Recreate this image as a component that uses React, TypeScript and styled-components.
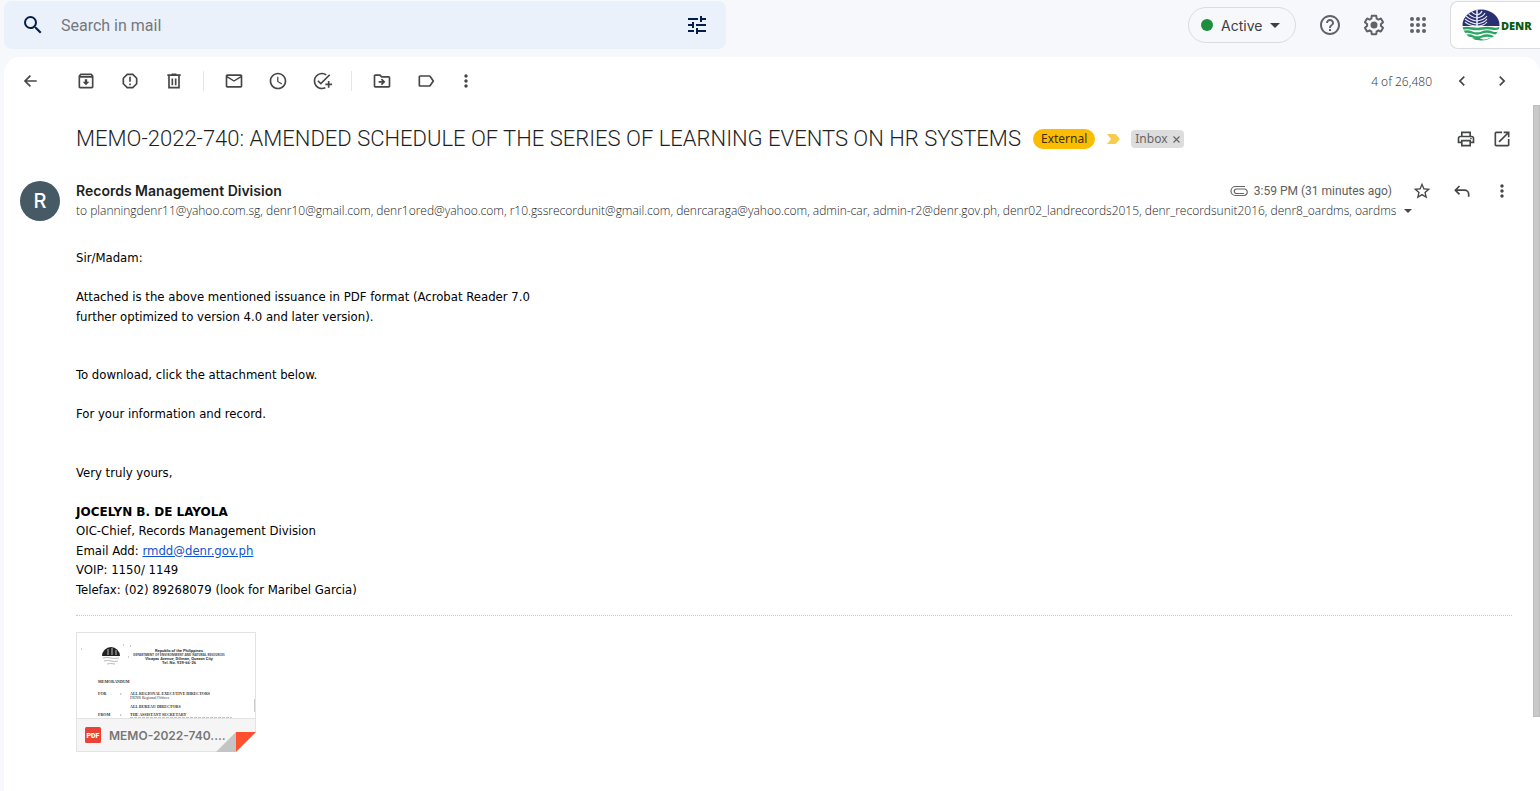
import React from "react";
import styled, { createGlobalStyle } from "styled-components";
import {
  MdAccessTime,
  MdAddTask,
  MdChevronLeft,
  MdChevronRight,
  MdHelpOutline,
  MdLabelOutline,
  MdMoreVert,
  MdOpenInNew,
  MdOutlineArchive,
  MdOutlineDriveFileMove,
  MdOutlineMail,
  MdOutlinePrint,
  MdReportGmailerrorred,
  MdSearch,
  MdStarBorder,
  MdTune,
} from "react-icons/md";

const ui = `Inter, Roboto, "Liberation Sans", sans-serif`;

const GlobalStyle = createGlobalStyle`
  *, *::before, *::after { box-sizing: border-box; }
  body { margin: 0; background: #f6f8fc; color: #202124; font-family: ${ui}; overflow: hidden; }
  button { font: inherit; color: inherit; border: 0; padding: 0; background: none; cursor: pointer; }
  svg { display: block; flex: none; }
`;

const Page = styled.div`
  display: flex;
  flex-direction: column;
  height: 100vh;
`;

const Header = styled.header`
  display: flex;
  align-items: flex-start;
  justify-content: space-between;
  height: 57px;
  flex: none;
  padding: 1px 0 0 4px;
`;

const SearchBar = styled.form`
  display: flex;
  align-items: center;
  flex: 0 1 722px;
  height: 48px;
  padding: 0 8px;
  border-radius: 8px;
  background: #eaf1fb;
  color: #041e49;
`;

const SearchButton = styled.button`
  display: grid;
  place-items: center;
  width: 42px;
  height: 40px;
  flex: none;
`;

const SearchInput = styled.input`
  flex: 1;
  min-width: 0;
  border: 0;
  outline: 0;
  padding: 0 0 0 7px;
  background: transparent;
  font: 400 16px Roboto, sans-serif;
  color: #202124;
  &::placeholder { color: #74787c; opacity: 1; }
`;

const HeaderTools = styled.div`
  display: flex;
  align-items: center;
  height: 48px;
  flex: none;
  color: #5f6368;
`;

const StatusButton = styled.button`
  display: flex;
  align-items: center;
  width: 108px;
  height: 36px;
  margin-right: 12px;
  padding: 0 12px;
  gap: 8px;
  border: 1px solid #dadce0;
  border-radius: 18px;
  font-size: 14px;
  color: #3c4043;
`;

const StatusDot = styled.span`
  width: 12px;
  height: 12px;
  border-radius: 50%;
  background: #1e8e3e;
`;

const Caret = styled.span<{ $size: number }>`
  display: block;
  width: 0;
  height: 0;
  border: ${(p) => p.$size}px solid transparent;
  border-top-color: currentColor;
  border-bottom: 0;
`;

const ToolButton = styled.button<{ $width: number }>`
  display: grid;
  place-items: center;
  width: ${(p) => p.$width}px;
  height: 40px;
  flex: none;
`;

const BrandLink = styled.a`
  display: flex;
  align-items: center;
  gap: 1px;
  width: 90px;
  height: 48px;
  margin-left: 10px;
  padding-left: 11px;
  border: 1px solid #dadce0;
  border-right: 0;
  border-radius: 8px 0 0 8px;
  background: #fff;
  color: #0b5a12;
  font: 800 11px "Open Sans", sans-serif;
  text-decoration: none;
`;

const Panel = styled.main`
  display: flex;
  flex-direction: column;
  flex: 1;
  min-height: 0;
  margin-left: 4px;
  border-radius: 16px 16px 0 0;
  background: #fff;
`;

const Toolbar = styled.div`
  display: flex;
  align-items: center;
  height: 48px;
  flex: none;
  padding: 0 18px 0 4px;
  color: #444746;
`;

const BackButton = styled(ToolButton)`
  margin-right: 12px;
`;

const Separator = styled.span`
  width: 1px;
  height: 20px;
  margin: 0 8px 0 7px;
  background: #e3e5e8;
`;

const Count = styled.span`
  margin-left: auto;
  padding-right: 10px;
  font: 300 12px "Noto Sans", sans-serif;
  color: #444746;
`;

const Scroller = styled.div`
  display: flex;
  flex: 1;
  min-height: 0;
`;

const Message = styled.article`
  flex: 1;
  min-width: 0;
  padding: 16px 0 0 16px;
`;

const ScrollThumb = styled.div`
  width: 7px;
  height: 612px;
  max-height: 90%;
  flex: none;
  background: #c9c9c9;
  border: 1px solid #bdbdbd;
`;

const SubjectRow = styled.div`
  display: flex;
  align-items: center;
  height: 36px;
  padding: 0 13px 0 56px;
`;

const Subject = styled.h1`
  margin: 0 12px 0 0;
  font: 300 22px/28px Roboto, sans-serif;
  color: #1f1f1f;
  white-space: nowrap;
`;

const ExternalChip = styled.span`
  height: 20px;
  padding: 0 8px;
  border-radius: 10px;
  background: #fbbc04;
  color: #3c3000;
  font: 400 12px/20px "Noto Sans", sans-serif;
`;

const ImportanceButton = styled.button`
  margin: 0 11px 0 12px;
`;

const InboxChip = styled.span`
  display: flex;
  align-items: center;
  gap: 5px;
  height: 18px;
  padding: 0 4px;
  border-radius: 4px;
  background: #ddd;
  color: #666;
  font: 400 12px/18px "Noto Sans", sans-serif;
`;

const SubjectTools = styled.div`
  display: flex;
  margin-left: auto;
  color: #444746;
`;

const SenderRow = styled.div`
  display: flex;
  gap: 16px;
  padding-top: 24px;
`;

const Avatar = styled.div`
  display: grid;
  place-items: center;
  width: 40px;
  height: 40px;
  flex: none;
  border-radius: 50%;
  background: #455a64;
  color: #fff;
  font: 500 20px Inter, sans-serif;
`;

const SenderInfo = styled.div`
  flex: 1;
  min-width: 0;
`;

const SenderTop = styled.div`
  display: flex;
  align-items: center;
  height: 20px;
  padding-right: 11px;
  color: #444746;
`;

const SenderName = styled.h2`
  margin: 0 auto 0 0;
  font: 600 14px/20px ${ui};
  color: #1f1f1f;
`;

const Sent = styled.time`
  margin: 0 10px 0 6px;
  font: 400 12px/20px Roboto, sans-serif;
  color: #5e5e5e;
`;

const Recipients = styled.div`
  display: flex;
  align-items: center;
  gap: 6px;
  height: 20px;
  padding-right: 121px;
  color: #444746;
`;

const RecipientList = styled.span`
  flex: 1;
  min-width: 0;
  overflow: hidden;
  white-space: nowrap;
  font: 300 12px/20px "Open Sans", sans-serif;
  color: #222426;
`;

const Body = styled.div`
  margin: 27px 21px 0 56px;
  padding-bottom: 16px;
  border-bottom: 1px dotted #c8c8c8;
  font: 400 13px/1.5 "DejaVu Sans Condensed", "DejaVu Sans", sans-serif;
  color: #000;
`;

const Signer = styled.strong`
  font: 700 12px/1 "DejaVu Sans", sans-serif;
`;

const MailLink = styled.a`
  color: #1155cc;
`;

const Attachment = styled.a`
  position: relative;
  display: block;
  width: 180px;
  height: 120px;
  margin: 16px 0 0 56px;
  border: 1px solid #e3e3e3;
  color: #777;
  text-decoration: none;
`;

const AttachmentBar = styled.span`
  display: flex;
  align-items: center;
  gap: 8px;
  height: 33px;
  padding: 0 8px;
  border-top: 1px solid #e3e3e3;
  background: #f5f5f5;
  font: 600 12px ${ui};
`;

const Fold = styled.svg`
  position: absolute;
  right: -1px;
  bottom: -1px;
`;

const Glyph = ({ size = 20, children }: { size?: number; children: React.ReactNode }) => (
  <svg width={size} height={size} viewBox="0 0 24 24" fill="none" stroke="currentColor" strokeWidth="2">
    {children}
  </svg>
);

const BackIcon = () => (
  <Glyph>
    <path d="M20 12H6M12.500 5.500L6 12l6.500 6.500" />
  </Glyph>
);

const TrashIcon = () => (
  <Glyph>
    <path d="M6 6v14h12V6M4 5h16M9 4h6M10 9v8M14 9v8" />
  </Glyph>
);

const ReplyIcon = () => (
  <Glyph>
    <path d="M9 6l-5 5 5 5M4 11h11a5 5 0 0 1 5 5v3" />
  </Glyph>
);

const PaperclipIcon = () => (
  <svg width="18" height="12" viewBox="0 0 18 12" fill="none" stroke="#666" strokeWidth="1.200">
    <path d="M14 8.500H6.500a2 2 0 0 1 0-4.500H14a2.700 2.700 0 0 1 0 6.500H5.500a4.500 4.500 0 0 1 0-9H15" />
  </svg>
);

const GearIcon = () => (
  <svg width="24" height="24" viewBox="0 0 24 24" fill="currentColor">
    <path d="M13.85 22.25h-3.7c-.74 0-1.36-.54-1.45-1.27l-.27-1.89c-.27-.14-.53-.29-.79-.46l-1.8.72c-.7.26-1.47-.03-1.81-.65L2.2 15.53c-.35-.66-.2-1.44.36-1.88l1.53-1.19c-.01-.15-.02-.3-.02-.46 0-.15.01-.31.02-.46l-1.52-1.19c-.59-.45-.74-1.26-.37-1.88l1.85-3.19c.34-.62 1.11-.9 1.79-.63l1.81.73c.26-.17.52-.32.78-.46l.27-1.91c.09-.7.71-1.25 1.44-1.25h3.7c.74 0 1.36.54 1.45 1.27l.27 1.89c.27.14.53.29.79.46l1.8-.72c.71-.26 1.48.03 1.82.65l1.84 3.18c.36.66.2 1.44-.36 1.88l-1.52 1.19c.01.15.02.3.02.46s-.01.31-.02.46l1.52 1.19c.56.45.72 1.23.37 1.86l-1.86 3.22c-.34.62-1.11.9-1.8.63l-1.8-.72c-.26.17-.52.32-.78.46l-.27 1.91c-.1.68-.72 1.22-1.46 1.22zm-3.23-2h2.76l.37-2.55.53-.22c.44-.18.88-.44 1.34-.78l.45-.34 2.38.96 1.38-2.4-2.03-1.58.07-.56c.03-.26.06-.51.06-.78s-.03-.53-.06-.78l-.07-.56 2.03-1.58-1.39-2.4-2.39.96-.45-.35c-.42-.32-.87-.58-1.33-.77l-.52-.22-.37-2.55h-2.76l-.37 2.55-.53.21c-.44.19-.88.44-1.34.79l-.45.33-2.38-.95-1.39 2.39 2.03 1.58-.07.56a7 7 0 0 0-.06.79c0 .26.02.53.06.78l.07.56-2.03 1.58 1.38 2.4 2.39-.96.45.35c.43.33.86.58 1.33.77l.53.22.38 2.55z" />
    <circle cx="12" cy="12" r="3.5" />
  </svg>
);

const AppsIcon = () => (
  <svg width="24" height="24" viewBox="0 0 24 24" fill="currentColor">
    {[6, 12, 18].map((y) => [6, 12, 18].map((x) => <circle key={`${x}-${y}`} cx={x} cy={y} r="2" />))}
  </svg>
);

const DenrLogo = () => (
  <svg width="38" height="32" viewBox="0 0 38 32">
    <clipPath id="globe">
      <ellipse cx="19" cy="16" rx="18.5" ry="15.5" />
    </clipPath>
    <g clipPath="url(#globe)">
      <rect width="38" height="32" fill="#fff" />
      <rect width="38" height="17" fill="#2b3070" />
      <g fill="none" stroke="#e8eaf4" strokeWidth="1.1">
        <path d="M15 1v16" strokeWidth="1.6" />
        <path d="M15 6Q11 5 9 2M15 9Q9 8 6 4M15 12Q8 11 4 7M15 15Q8 14 3 10M15 17Q8 17 3 13M15 6q4-1 5-4M15 9q6-1 8-5M15 12q7-1 10-5M15 15q7-1 10-5M15 17q7 0 10-4" />
      </g>
      <g fill="none" stroke="#2aa562" strokeWidth="2.4">
        <path d="M0 19.500q5-1 10 0t10 0t10 0t9-1M0 23.500q5-2 10 0t10 0t10 0t9-1M3 27.500q4-2 8 0t9 0t10 0t6-1M10 31q5-2 9 0t9-1" />
      </g>
    </g>
  </svg>
);

const MemoPreview = () => (
  <svg width="178" height="85" viewBox="1 1 178 85" fontFamily="Liberation Serif, serif" fontSize="4" fill="#333">
    <rect x="1" y="1" width="178" height="85" fill="#fff" />
    <path d="M26 24a9 9 0 0 1 18 0z" fill="#222" />
    <path d="M32 23v-6M36 23V16M40 23v-5" stroke="#fff" strokeWidth=".7" />
    <path d="M27 26q4-1 8 0t8 0M28 29q4-1 7 0t7 0M31 32q3-1 8 0" fill="none" stroke="#aaa" strokeWidth=".8" />
    <path d="M5 17h1M47 13h1M54 14h1M52 25h1" stroke="#999" />
    <g textAnchor="middle" fontFamily="Roboto, sans-serif">
      <text x="103" y="20" fontWeight="700">Republic of the Philippines</text>
      <text x="103" y="24" fill="#555" fontFamily="Open Sans Condensed, Roboto, sans-serif">DEPARTMENT OF ENVIRONMENT AND NATURAL RESOURCES</text>
      <text x="103" y="28" fontWeight="700">Visayas Avenue, Diliman, Quezon City</text>
      <text x="103" y="32" fontWeight="700">Tel. No. 929-66-26</text>
    </g>
    <g fontWeight="700">
      <text x="22" y="51">MEMORANDUM</text>
      <text x="22" y="63">FOR</text>
      <text x="44" y="63">:</text>
      <text x="54" y="63">ALL REGIONAL EXECUTIVE DIRECTORS</text>
      <text x="54" y="76">ALL BUREAU DIRECTORS</text>
      <text x="22" y="84">FROM</text>
      <text x="44" y="84">:</text>
      <text x="54" y="84">THE ASSISTANT SECRETARY</text>
    </g>
    <text x="54" y="67">DENR Regional Offices</text>
    <path d="M54 86h102" stroke="#888" strokeDasharray="3 1" />
    <path d="M178.500 67v13" stroke="#ccc" />
  </svg>
);

const PdfIcon = () => (
  <svg width="16" height="16" viewBox="0 0 16 16">
    <rect width="16" height="16" rx="1.5" fill="#ea4335" />
    <text x="8" y="11" textAnchor="middle" fontFamily="Roboto, sans-serif" fontSize="7" fontWeight="900" fill="#fff">
      PDF
    </text>
  </svg>
);

const recipients =
  "to planningdenr11@yahoo.com.sg, denr10@gmail.com, denr1ored@yahoo.com, r10.gssrecordunit@gmail.com, denrcaraga@yahoo.com, admin-car, admin-r2@denr.gov.ph, denr02_landrecords2015, denr_recordsunit2016, denr8_oardms, oardms";

export default function App() {
  return (
    <Page>
      <GlobalStyle />
      <Header>
        <SearchBar role="search">
          <SearchButton type="button" aria-label="Search"><MdSearch size={24} /></SearchButton>
          <SearchInput type="text" placeholder="Search in mail" aria-label="Search in mail" />
          <SearchButton type="button" aria-label="Show search options"><MdTune size={24} /></SearchButton>
        </SearchBar>
        <HeaderTools>
          <StatusButton>
            <StatusDot />
            Active
            <Caret $size={5} />
          </StatusButton>
          <ToolButton $width={44} aria-label="Support"><MdHelpOutline size={24} /></ToolButton>
          <ToolButton $width={44} aria-label="Settings"><GearIcon /></ToolButton>
          <ToolButton $width={44} aria-label="Google apps"><AppsIcon /></ToolButton>
          <BrandLink href="#denr"><DenrLogo />DENR</BrandLink>
        </HeaderTools>
      </Header>
      <Panel>
        <Toolbar>
          <BackButton $width={44} aria-label="Back to Inbox"><BackIcon /></BackButton>
          <ToolButton $width={44} aria-label="Archive"><MdOutlineArchive size={20} /></ToolButton>
          <ToolButton $width={44} aria-label="Report spam"><MdReportGmailerrorred size={20} /></ToolButton>
          <ToolButton $width={44} aria-label="Delete"><TrashIcon /></ToolButton>
          <Separator />
          <ToolButton $width={44} aria-label="Mark as unread"><MdOutlineMail size={20} /></ToolButton>
          <ToolButton $width={44} aria-label="Snooze"><MdAccessTime size={20} /></ToolButton>
          <ToolButton $width={44} aria-label="Add to Tasks"><MdAddTask size={20} /></ToolButton>
          <Separator />
          <ToolButton $width={44} aria-label="Move to"><MdOutlineDriveFileMove size={20} /></ToolButton>
          <ToolButton $width={44} aria-label="Labels"><MdLabelOutline size={20} /></ToolButton>
          <ToolButton $width={36} aria-label="More"><MdMoreVert size={20} /></ToolButton>
          <Count>4 of 26,480</Count>
          <ToolButton $width={40} aria-label="Newer"><MdChevronLeft size={20} /></ToolButton>
          <ToolButton $width={40} aria-label="Older"><MdChevronRight size={20} /></ToolButton>
        </Toolbar>
        <Scroller>
          <Message>
            <SubjectRow>
              <Subject>MEMO-2022-740: AMENDED SCHEDULE OF THE SERIES OF LEARNING EVENTS ON HR SYSTEMS</Subject>
              <ExternalChip>External</ExternalChip>
              <ImportanceButton aria-label="Important">
                <svg width="13" height="10" viewBox="0 0 13 10"><path d="M0 0h8.500L13 5l-4.500 5H0l4-5z" fill="#f7cb4d" /></svg>
              </ImportanceButton>
              <InboxChip>
                Inbox
                <button aria-label="Remove label Inbox">
                  <svg width="7" height="7" viewBox="0 0 7 7" stroke="#666" strokeWidth="1.200"><path d="M.5.5l6 6M6.500.5l-6 6" /></svg>
                </button>
              </InboxChip>
              <SubjectTools>
                <ToolButton $width={36} aria-label="Print all"><MdOutlinePrint size={20} /></ToolButton>
                <ToolButton $width={36} aria-label="In new window"><MdOpenInNew size={20} /></ToolButton>
              </SubjectTools>
            </SubjectRow>
            <SenderRow>
              <Avatar>R</Avatar>
              <SenderInfo>
                <SenderTop>
                  <SenderName>Records Management Division</SenderName>
                  <PaperclipIcon />
                  <Sent>3:59 PM (31 minutes ago)</Sent>
                  <ToolButton $width={40} aria-label="Not starred"><MdStarBorder size={20} /></ToolButton>
                  <ToolButton $width={40} aria-label="Reply"><ReplyIcon /></ToolButton>
                  <ToolButton $width={40} aria-label="More message options"><MdMoreVert size={20} /></ToolButton>
                </SenderTop>
                <Recipients>
                  <RecipientList>{recipients}</RecipientList>
                  <button aria-label="Show details"><Caret $size={4} /></button>
                </Recipients>
              </SenderInfo>
            </SenderRow>
            <Body>
              Sir/Madam:<br />
              <br />
              Attached is the above mentioned issuance in PDF format (Acrobat Reader 7.0<br />
              further optimized to version 4.0 and later version).<br />
              <br />
              <br />
              To download, click the attachment below.<br />
              <br />
              For your information and record.<br />
              <br />
              <br />
              Very truly yours,<br />
              <br />
              <Signer>JOCELYN B. DE LAYOLA</Signer><br />
              OIC-Chief, Records Management Division<br />
              Email Add: <MailLink href="mailto:rmdd@denr.gov.ph">rmdd@denr.gov.ph</MailLink><br />
              VOIP: 1150/ 1149<br />
              Telefax: (02) 89268079 (look for Maribel Garcia)
            </Body>
            <Attachment href="#attachment">
              <MemoPreview />
              <AttachmentBar><PdfIcon />MEMO-2022-740....</AttachmentBar>
              <Fold width="40" height="20" viewBox="0 0 40 20">
                <path d="M20 20H40V0z" fill="#fff" />
                <path d="M0 20L20 0V20z" fill="#c4c4c4" />
                <path d="M20 0H40L20 20z" fill="#ff5030" />
              </Fold>
            </Attachment>
          </Message>
          <ScrollThumb />
        </Scroller>
      </Panel>
    </Page>
  );
}
